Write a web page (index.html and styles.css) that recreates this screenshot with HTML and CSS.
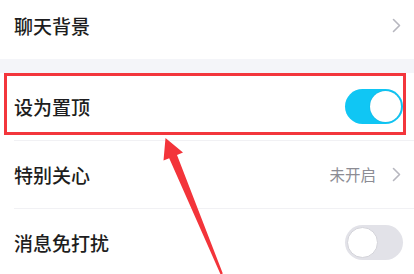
FILE: index.html
```html
<!DOCTYPE html>
<html lang="zh">
<head>
<meta charset="utf-8">
<link rel="stylesheet" href="styles.css">
</head>
<body>
<div class="screen">
  <div class="group first">
    <div class="row">
      <span class="label">聊天背景</span>
      <svg class="chev" width="9" height="15" viewBox="0 0 9 15"><path d="M1.5 1.5 L7.5 7.5 L1.5 13.5" fill="none" stroke="#b7b7bf" stroke-width="1.6" stroke-linecap="round" stroke-linejoin="round"/></svg>
    </div>
  </div>
  <div class="gap"></div>
  <div class="group">
    <div class="row">
      <span class="label">设为置顶</span>
      <span class="toggle on"><span class="knob"></span></span>
    </div>
    <div class="divider"></div>
    <div class="row">
      <span class="label">特别关心</span>
      <span class="right">
        <span class="value">未开启</span>
        <svg class="chev" width="9" height="15" viewBox="0 0 9 15"><path d="M1.5 1.5 L7.5 7.5 L1.5 13.5" fill="none" stroke="#b7b7bf" stroke-width="1.6" stroke-linecap="round" stroke-linejoin="round"/></svg>
      </span>
    </div>
    <div class="divider"></div>
    <div class="row">
      <span class="label">消息免打扰</span>
      <span class="toggle off"><span class="knob"></span></span>
    </div>
  </div>
  <div class="highlight"></div>
  <svg class="arrow" width="414" height="274" viewBox="0 0 414 274">
    <polygon points="165.5,138 163.5,160.5 169.2,158.2 220.6,274.5 222.8,273.6 177.0,155.0 183,152.5" fill="#f3343a"/>
  </svg>
</div>
</body>
</html>
```

FILE: styles.css
```css
html, body {
  margin: 0;
  padding: 0;
  background: #ffffff;
}
body {
  font-family: "Noto Sans CJK SC", "Noto Sans", sans-serif;
  overflow: hidden;
}
.screen {
  position: relative;
  width: 414px;
  height: 274px;
  overflow: hidden;
  background: #ffffff;
}
.group {
  background: #ffffff;
}
.group.first {
  margin-top: -9px;
}
.gap {
  height: 14px;
  background: #f4f5f9;
}
.row {
  height: 67px;
  display: flex;
  align-items: center;
  justify-content: space-between;
  padding: 0 11px 0 14px;
}
.group.first .row {
  height: 68px;
  padding-right: 13px;
}
.label {
  font-size: 19px;
  font-weight: 500;
  color: #1d1d20;
  line-height: 1;
}
.divider {
  height: 1px;
  margin-left: 14px;
  background: #f1f1f4;
}
.right {
  display: flex;
  align-items: center;
  gap: 16px;
  padding-right: 2px;
}
.value {
  font-size: 15.5px;
  color: #8c8c94;
  line-height: 1;
}
.chev {
  display: block;
}
.toggle {
  position: relative;
  width: 58px;
  height: 35px;
  border-radius: 18px;
  box-sizing: border-box;
}
.toggle.on {
  background: #10c6f4;
}
.toggle.off {
  background: #e2e2e8;
}
.knob {
  position: absolute;
  top: 2px;
  width: 31px;
  height: 31px;
  border-radius: 50%;
  background: #ffffff;
  box-sizing: border-box;
}
.toggle.on .knob {
  right: 2px;
  box-shadow: 0 0 1px rgba(0, 90, 130, 0.4);
}
.toggle.off .knob {
  left: 2px;
  border: 1px solid #d4d4da;
}
.highlight {
  position: absolute;
  left: 4px;
  top: 73px;
  width: 402px;
  height: 62px;
  border: 3px solid #f3363c;
  box-sizing: border-box;
}
.arrow {
  position: absolute;
  left: 0;
  top: 0;
}
```
